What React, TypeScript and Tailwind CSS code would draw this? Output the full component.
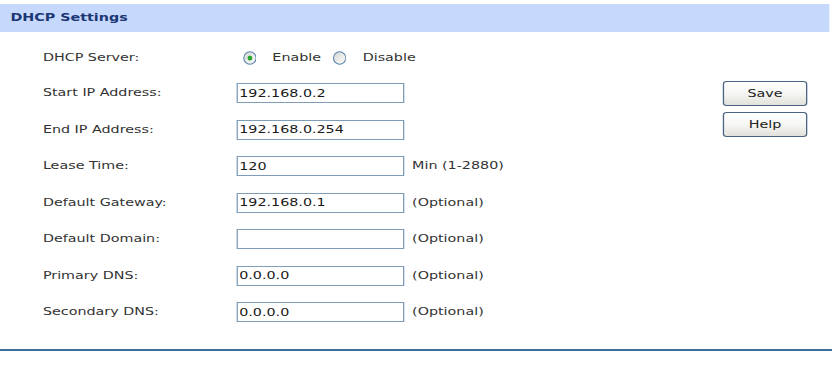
import React from 'react';

type Row = {
  label: string;
  value: string;
  hint?: string;
};

const rows: Row[] = [
  { label: 'Start IP Address:', value: '192.168.0.2' },
  { label: 'End IP Address:', value: '192.168.0.254' },
  { label: 'Lease Time:', value: '120', hint: 'Min (1-2880)' },
  { label: 'Default Gateway:', value: '192.168.0.1', hint: '(Optional)' },
  { label: 'Default Domain:', value: '', hint: '(Optional)' },
  { label: 'Primary DNS:', value: '0.0.0.0', hint: '(Optional)' },
  { label: 'Secondary DNS:', value: '0.0.0.0', hint: '(Optional)' },
];

// XP style radio, drawn narrow because the whole page is stretched horizontally
function Radio({ checked }: { checked?: boolean }) {
  const id = checked ? 'rg1' : 'rg0';
  return (
    <svg width="10.5" height="14" viewBox="0 0 14 14" preserveAspectRatio="none" className="shrink-0">
      <defs>
        <linearGradient id={id} x1="0" y1="0" x2="1" y2="1">
          <stop offset="0" stopColor="#d6d6d0" />
          <stop offset="1" stopColor="#ffffff" />
        </linearGradient>
      </defs>
      <circle cx="7" cy="7" r="6.3" fill={`url(#${id})`} stroke="#5b84ad" strokeWidth="1.1" />
      {checked && <circle cx="7" cy="7" r="2.5" fill="#27a72b" />}
    </svg>
  );
}

function TextField({ value }: { value: string }) {
  return (
    <div className="w-[129px] h-[20px] border border-[#7f9db9] bg-white flex items-center pl-[1px] text-[11px] text-[#1a1a1a] leading-none">
      {value}
    </div>
  );
}

function XpButton({ children }: { children: React.ReactNode }) {
  return (
    <button className="w-[65px] h-[25px] rounded-[3px] border border-[#4a6284] bg-gradient-to-b from-white via-[#f6f6f3] to-[#e2e1da] text-[11px] text-[#222] leading-none flex items-center justify-center">
      {children}
    </button>
  );
}

export default function App() {
  return (
    <div className="w-[832px] h-[367px] bg-white overflow-hidden">
      <div
        className="w-[640px] origin-top-left scale-x-[1.3] text-[#333] text-[11px]"
        style={{ fontFamily: '"DejaVu Sans", Verdana, sans-serif' }}
      >
        {/* Section header */}
        <div className="mt-[4px] h-[28px] w-[638px] bg-[#c6d8fc] flex items-center pl-[8px]">
          <span className="font-bold text-[11px] text-[#1b3674]">DHCP Settings</span>
        </div>

        <div className="flex">
          {/* Form */}
          <div className="w-[556px] pt-[9px]">
            <div className="h-[34px] flex items-center">
              <span className="w-[186.5px] pl-[33px]">DHCP Server:</span>
              <span className="flex items-center">
                <Radio checked />
                <span className="ml-[12.5px]">Enable</span>
                <span className="ml-[9px] flex"><Radio /></span>
                <span className="ml-[12.5px]">Disable</span>
              </span>
            </div>

            {rows.map((row) => (
              <div key={row.label} className="h-[36.5px] flex items-center">
                <span className="w-[182px] pl-[33px]">{row.label}</span>
                <TextField value={row.value} />
                {row.hint && <span className="ml-[6px]">{row.hint}</span>}
              </div>
            ))}
          </div>

          {/* Action buttons */}
          <div className="pt-[49px] flex flex-col gap-[6px]">
            <XpButton>Save</XpButton>
            <XpButton>Help</XpButton>
          </div>
        </div>

        <div className="mt-[18px] border-t-2 border-[#3c6d9b]" />
      </div>
    </div>
  );
}
